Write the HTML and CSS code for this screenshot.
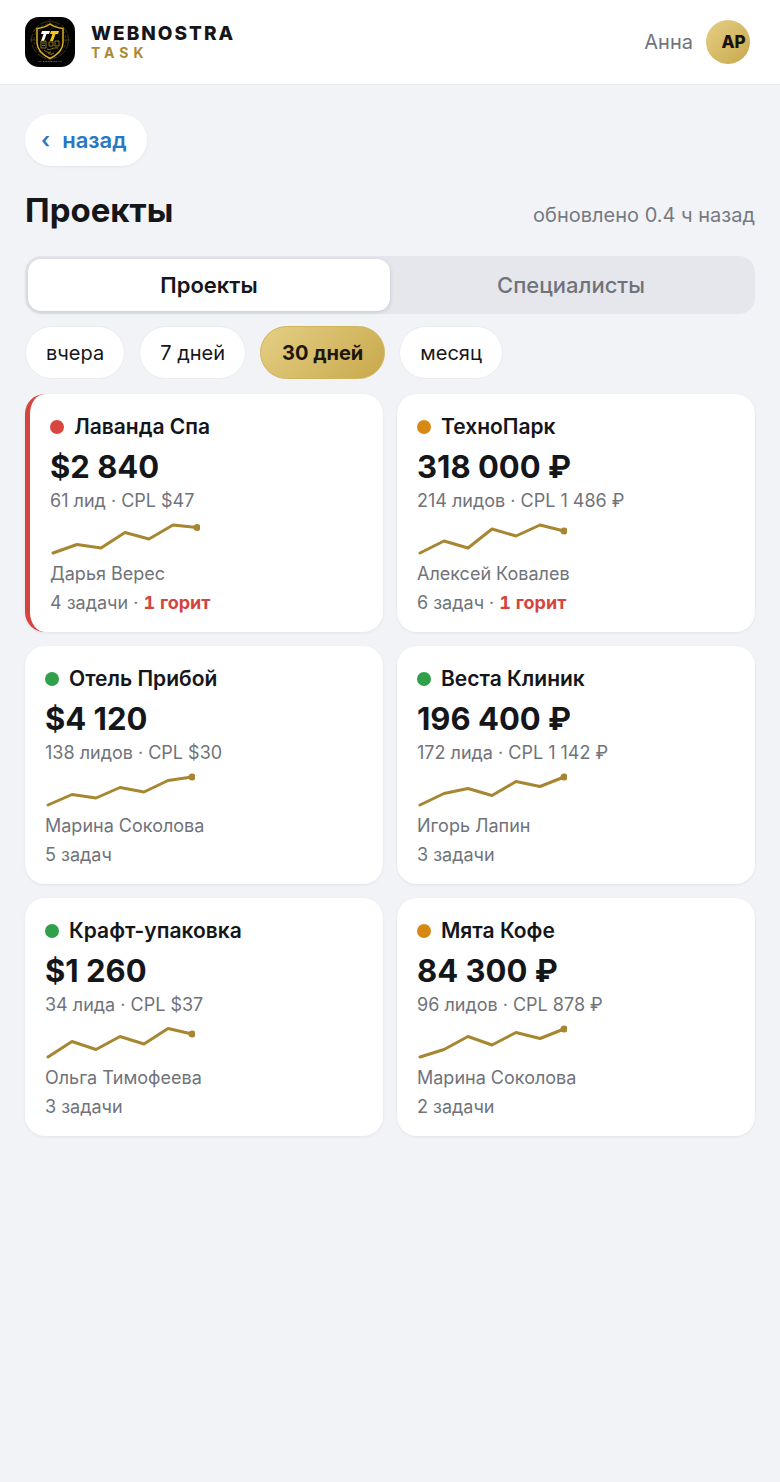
FILE: index.html
```html
<!DOCTYPE html>
<html lang="ru">
<head>
<meta charset="utf-8">
<meta name="viewport" content="width=device-width, initial-scale=1">
<title>Webnostra Task — Проекты</title>
<link rel="stylesheet" href="styles.css">
</head>
<body>
<header class="topbar">
  <div class="brand">
    <svg class="brand-logo" viewBox="0 0 50 50" aria-hidden="true">
      <rect width="50" height="50" rx="14" fill="#030303"/>
      <g fill="none" stroke="#5c4d12" stroke-width=".7">
        <circle cx="25" cy="23" r="18.500" stroke-dasharray="9 2"/>
        <circle cx="25" cy="23" r="16" stroke-dasharray="3 2"/>
        <path d="M25 2v6M5 23h6M39 23h6M25 41v3M13 44.500h4M33 44.500h4"/>
      </g>
      <path d="M25 7c4 3 8 4 13 4.500v14c0 7-5 12-13 16-8-4-13-9-13-16v-14C17 11 21 10 25 7z" fill="#080703" stroke="#d6b022" stroke-width="1.500"/>
      <path d="M17 14h8l-1 3h-2.500l-2.500 7h-3l2.500-7h-2.500z" fill="#fff"/>
      <path d="M26 14h8l-1 3h-2.500l-2.500 7h-3l2.500-7h-2.500z" fill="#f2c80f"/>
      <g fill="none" stroke="#9a801c" stroke-width=".9">
        <path d="M16 24h5v7h-5zM17 26h3M17 28.500h3M24 25h4v4h-4zM30 24h4v5h-4zM22 32c3 2 6-2 11-1M19 33c2 2 4 3 7 2M23 36l3 1.500 3-1.500"/>
      </g>
      <path d="M18 44.500h14" stroke="#7c681b" stroke-width="1.200" stroke-dasharray="1 .6"/>
    </svg>
    <div class="brand-text">
      <span class="brand-name">WEBNOSTRA</span>
      <span class="brand-sub">TASK</span>
    </div>
  </div>
  <div class="user">
    <span class="user-name">Анна</span>
    <button class="avatar" type="button" aria-label="Профиль">АР</button>
  </div>
</header>

<main class="page">
  <a class="back" href="#"><span class="back-arrow">‹</span>назад</a>
  <div class="heading">
    <h1 class="title">Проекты</h1>
    <span class="updated">обновлено 0.4 ч назад</span>
  </div>

  <div class="tabs">
    <button class="tab tab-active" type="button">Проекты</button>
    <button class="tab" type="button">Специалисты</button>
  </div>

  <div class="chips">
    <button class="chip" type="button">вчера</button>
    <button class="chip" type="button">7 дней</button>
    <button class="chip chip-active" type="button">30 дней</button>
    <button class="chip" type="button">месяц</button>
  </div>

  <section class="cards">
    <article class="card card-alert">
      <h2 class="card-title"><span class="dot dot-red"></span>Лаванда Спа</h2>
      <p class="amount">$2 840</p>
      <p class="meta">61 лид · CPL $47</p>
      <svg class="spark" viewBox="0 0 150 36" aria-hidden="true"><polyline points="3,34 27,25.500 51,29 75,13.500 99,20 123,6 147,8.500"/><circle cx="147" cy="8.500" r="3.500"/></svg>
      <p class="meta">Дарья Верес</p>
      <p class="meta">4 задачи · <b class="hot">1 горит</b></p>
    </article>
    <article class="card">
      <h2 class="card-title"><span class="dot dot-orange"></span>ТехноПарк</h2>
      <p class="amount">318 000 ₽</p>
      <p class="meta">214 лидов · CPL 1 486 ₽</p>
      <svg class="spark" viewBox="0 0 150 36" aria-hidden="true"><polyline points="3,34 27,22 51,29 75,10 99,17 123,6 147,12"/><circle cx="147" cy="12" r="3.500"/></svg>
      <p class="meta">Алексей Ковалев</p>
      <p class="meta">6 задач · <b class="hot">1 горит</b></p>
    </article>
    <article class="card">
      <h2 class="card-title"><span class="dot dot-green"></span>Отель Прибой</h2>
      <p class="amount">$4 120</p>
      <p class="meta">138 лидов · CPL $30</p>
      <svg class="spark" viewBox="0 0 150 36" aria-hidden="true"><polyline points="3,34 27,23.500 51,27 75,16.500 99,21 123,9.500 147,6"/><circle cx="147" cy="6" r="3.500"/></svg>
      <p class="meta">Марина Соколова</p>
      <p class="meta">5 задач</p>
    </article>
    <article class="card">
      <h2 class="card-title"><span class="dot dot-green"></span>Веста Клиник</h2>
      <p class="amount">196 400 ₽</p>
      <p class="meta">172 лида · CPL 1 142 ₽</p>
      <svg class="spark" viewBox="0 0 150 36" aria-hidden="true"><polyline points="3,34 27,22.500 51,17.500 75,24.500 99,10.500 123,15.500 147,6"/><circle cx="147" cy="6" r="3.500"/></svg>
      <p class="meta">Игорь Лапин</p>
      <p class="meta">3 задачи</p>
    </article>
    <article class="card">
      <h2 class="card-title"><span class="dot dot-green"></span>Крафт-упаковка</h2>
      <p class="amount">$1 260</p>
      <p class="meta">34 лида · CPL $37</p>
      <svg class="spark" viewBox="0 0 150 36" aria-hidden="true"><polyline points="3,34 27,18.500 51,26.500 75,13.500 99,21 123,5.500 147,11"/><circle cx="147" cy="11" r="3.500"/></svg>
      <p class="meta">Ольга Тимофеева</p>
      <p class="meta">3 задачи</p>
    </article>
    <article class="card">
      <h2 class="card-title"><span class="dot dot-orange"></span>Мята Кофе</h2>
      <p class="amount">84 300 ₽</p>
      <p class="meta">96 лидов · CPL 878 ₽</p>
      <svg class="spark" viewBox="0 0 150 36" aria-hidden="true"><polyline points="3,34 27,26.500 51,13.500 75,22 99,9.500 123,15.500 147,6"/><circle cx="147" cy="6" r="3.500"/></svg>
      <p class="meta">Марина Соколова</p>
      <p class="meta">2 задачи</p>
    </article>
  </section>
</main>
</body>
</html>
```

FILE: styles.css
```css
* {
  box-sizing: border-box;
}

body {
  margin: 0;
  min-height: 100vh;
  background: #f1f3f7;
  color: #15161a;
  font-family: Inter, "Noto Sans", sans-serif;
}

button {
  margin: 0;
  border: 0;
  padding: 0;
  font-family: inherit;
  color: inherit;
  cursor: pointer;
}

h1, h2, p {
  margin: 0;
}

.topbar {
  display: flex;
  align-items: center;
  justify-content: space-between;
  padding: 17px 30px 17px 25px;
  background: #fff;
  border-bottom: 1px solid #e8eaf1;
}

.brand {
  display: flex;
  align-items: center;
  gap: 16px;
}

.brand-logo {
  width: 50px;
  height: 50px;
}

.brand-text {
  display: flex;
  flex-direction: column;
}

.brand-name {
  font-size: 19px;
  line-height: 22px;
  font-weight: 800;
  letter-spacing: 2px;
}

.brand-sub {
  font-size: 14px;
  line-height: 16px;
  font-weight: 700;
  letter-spacing: 5px;
  color: #ac8a30;
}

.user {
  display: flex;
  align-items: center;
  gap: 13px;
}

.user-name {
  font-size: 20px;
  color: #70737a;
}

.avatar {
  width: 44px;
  height: 44px;
  padding-left: 11px;
  border-radius: 50%;
  background: linear-gradient(135deg, #e5cf85, #c8a84c);
  color: #15130c;
  font-size: 17px;
  font-weight: 800;
}

.page {
  padding: 29px 25px;
}

.back {
  display: inline-flex;
  align-items: center;
  gap: 12px;
  height: 52px;
  padding: 0 20px 0 16px;
  border-radius: 26px;
  background: #fff;
  box-shadow: 0 1px 3px rgba(20, 25, 40, .06);
  color: #2677c5;
  font-size: 22px;
  font-weight: 600;
  text-decoration: none;
}

.heading {
  display: flex;
  align-items: baseline;
  justify-content: space-between;
  margin: 20px 0 22px;
}

.title {
  font-size: 33px;
  line-height: 48px;
  font-weight: 700;
}

.updated {
  font-size: 20px;
  color: #777a80;
}

.tabs {
  display: grid;
  grid-template-columns: 1fr 1fr;
  padding: 3px;
  border-radius: 16px;
  background: #e6e7ed;
}

.tab {
  height: 52px;
  border-radius: 13px;
  background: transparent;
  color: #70737a;
  font-size: 22px;
  font-weight: 500;
}

.tab-active {
  background: #fff;
  color: #15161a;
  font-weight: 600;
  box-shadow: 0 1px 4px rgba(20, 25, 40, .16);
}

.chips {
  display: flex;
  flex-wrap: wrap;
  gap: 14px;
  margin: 12px 0 15px;
}

.chip {
  height: 53px;
  padding: 0 20px;
  border: 1px solid #e9ebef;
  border-radius: 27px;
  background: #fff;
  font-size: 20px;
}

.chip-active {
  padding: 0 21px;
  border-color: #d0b45c;
  background: linear-gradient(135deg, #e5cf85, #c8a84c);
  color: #1c170b;
  font-weight: 700;
}

.cards {
  display: grid;
  grid-template-columns: 1fr 1fr;
  gap: 14px;
}

.card {
  padding: 20px 20px 15px;
  border-radius: 20px;
  background: #fff;
  box-shadow: 0 1px 3px rgba(20, 25, 40, .07);
}

.card-alert {
  border-left: 5px solid #d4453e;
}

.card-title {
  display: flex;
  align-items: center;
  gap: 10px;
  margin-bottom: 8px;
  font-size: 21px;
  line-height: 26px;
  font-weight: 600;
}

.dot {
  width: 14px;
  height: 14px;
  border-radius: 50%;
}

.dot-red {
  background: #d9463f;
}

.dot-orange {
  background: #d78a13;
}

.dot-green {
  background: #31a04a;
}

.amount {
  font-size: 31px;
  line-height: 38px;
  font-weight: 700;
}

.meta {
  font-size: 18px;
  line-height: 29px;
  color: #70737a;
}

.hot {
  color: #d4453e;
  font-weight: 700;
  font-variant-numeric: tabular-nums;
}

.spark {
  display: block;
  width: 150px;
  height: 36px;
  margin: 4px 0;
}

.spark polyline {
  fill: none;
  stroke: #a78631;
  stroke-width: 3;
  stroke-linecap: round;
  stroke-linejoin: round;
}

.spark circle {
  fill: #a78631;
}
```
